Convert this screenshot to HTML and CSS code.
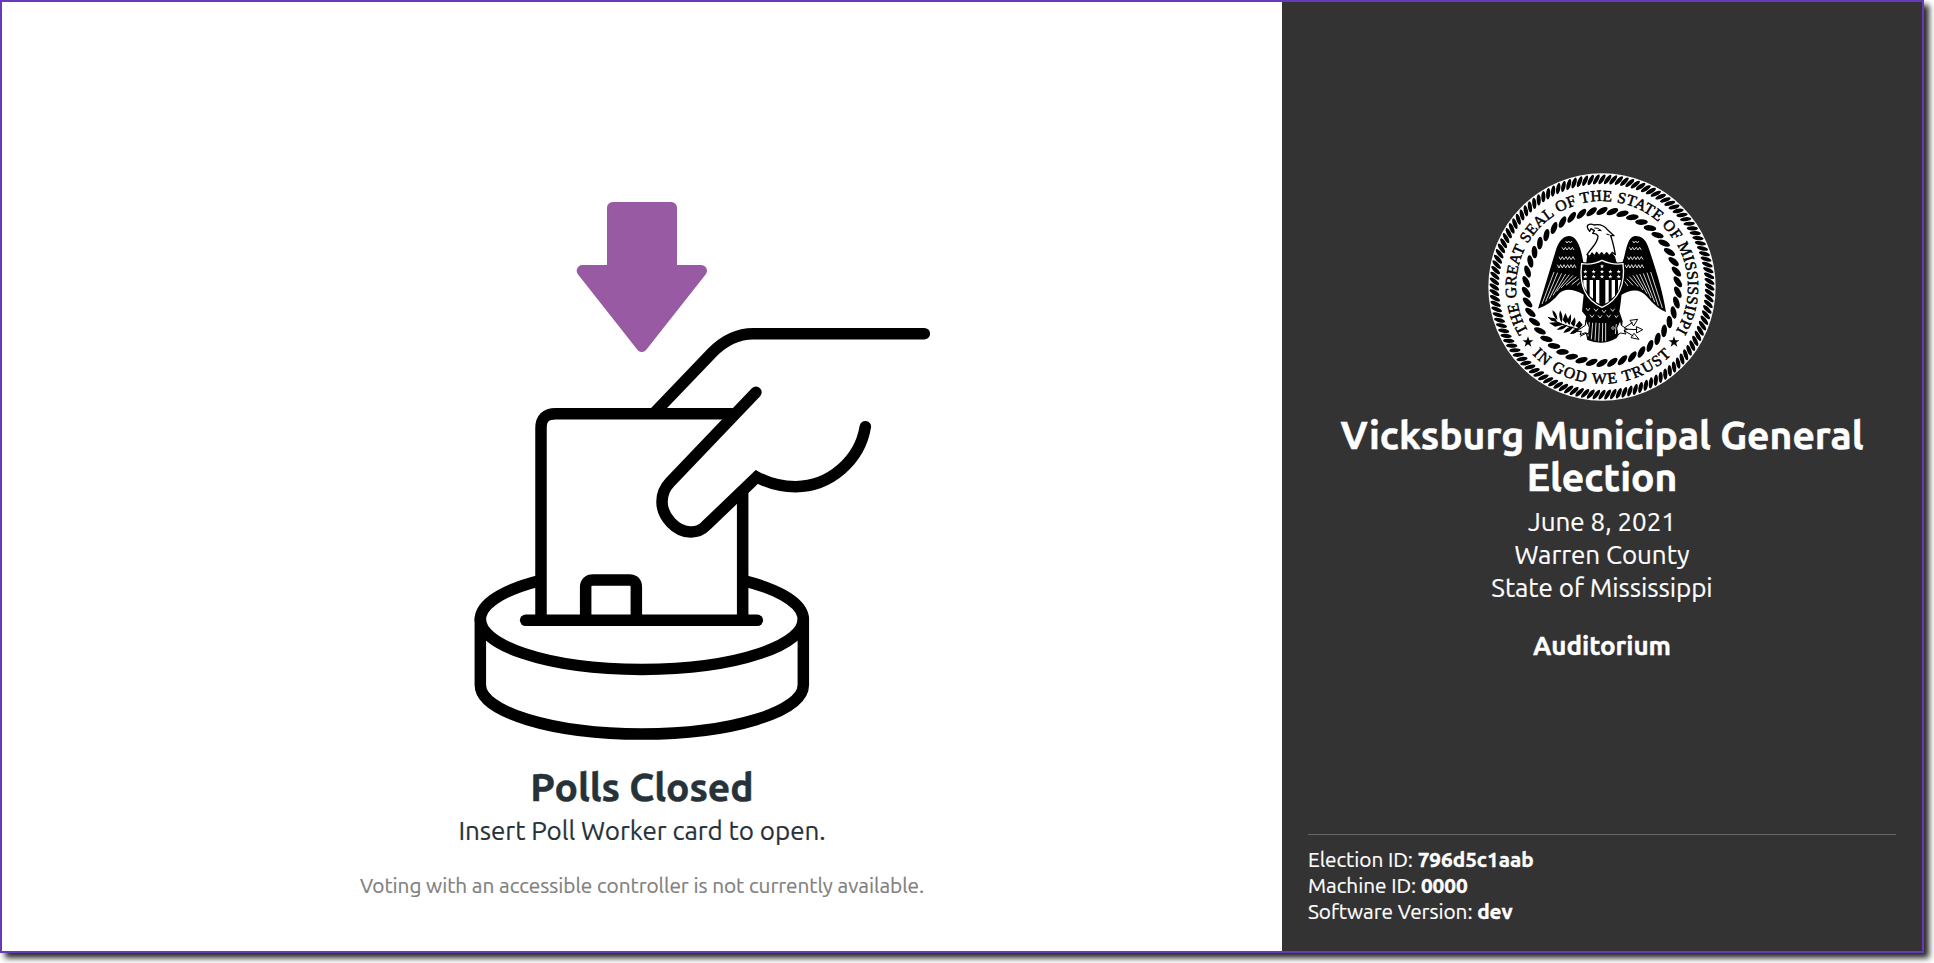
FILE: index.html
```html
<!DOCTYPE html>
<html lang="en">
<head>
<meta charset="utf-8">
<title>Polls Closed</title>
<link rel="stylesheet" href="styles.css">
</head>
<body>
<div class="window">
  <main class="main">
    <svg class="illustration" viewBox="-318 66 1731 1614">
      <path class="arrow" d="M458 83H634V272H724L545.5 499L367 272H458Z"/>
      <g class="lines">
        <path d="M585 697L756 518Q812 461 880 461H1393"/>
        <path d="M243 1320V744Q243 701 287 701H815"/>
        <path class="butt" d="M848 925V1320"/>
        <path d="M888 637L630 907Q606 932 606 965C606 1010 648 1056 693 1056Q720 1056 738 1037L890 891Q945 920 1007 920C1110 920 1200 840 1216 740"/>
        <path d="M197 1321H892"/>
        <path class="butt" d="M243 1201A484.500 150 0 1 0 848 1201"/>
        <path d="M61 1317V1515C61 1596 278 1662 545.500 1662S1030 1596 1030 1515V1317"/>
        <path d="M377 1321V1222Q377 1200 400 1200H508Q529 1200 529 1222V1321"/>
      </g>
    </svg>
    <h1 class="title polls">Polls Closed</h1>
    <p class="text insert">Insert Poll Worker card to open.</p>
    <p class="note">Voting with an accessible controller is not currently available.</p>
  </main>
  <aside class="sidebar">
    <div class="election">
      <svg class="seal" viewBox="24 25 684 684">
        <defs>
          <path id="arc-top" d="M144.800 499.900A258 258 0 1 1 587.200 499.900"/>
          <path id="arc-bottom" d="M157 569A291 291 0 0 0 575 569"/>
          <path id="star" d="M0-17L4.200-5.500H16L6.500 2L10 14L0 7L-10 14L-6.500 2L-16-5.500H-4.200Z"/>
        </defs>
        <circle cx="366" cy="367" r="341" fill="#fff"/>
        <g id="rope-outer"></g>
        <g id="rope-inner"></g>
        <text class="motto"><textPath href="#arc-top" textLength="1088" lengthAdjust="spacing">THE GREAT SEAL OF THE STATE OF MISSISSIPPI</textPath></text>
        <text class="motto"><textPath href="#arc-bottom" textLength="464" lengthAdjust="spacing">IN GOD WE TRUST</textPath></text>
        <use href="#star" x="144" y="532"/>
        <use href="#star" x="582" y="532"/>
        <!-- wings -->
        <path d="M312 305C306 265 296 215 268 214C245 213 232 240 226 262L174 432Q212 420 238 386Q262 362 312 390Z"/>
        <path d="M422 305C440 275 436 214 468 214C495 214 503 240 510 262C530 322 548 380 558 442Q532 434 500 395Q470 362 422 392Z"/>
        <g class="feathers">
          <path d="M186 418L222 322M197 411L233 324M208 402L245 326M219 392L257 328M230 380L268 330M243 370L279 332M258 362L289 336M275 360L298 342M291 362L304 350"/>
          <path d="M547 430L512 322M535 423L501 324M524 412L490 326M513 400L479 328M501 387L469 330M489 376L459 332M475 366L448 336M459 362L440 342M444 364L434 350"/>
          <path d="M232 300l5 10 5-10 5 10 5-10 5 10 6-10 5 10 5-10 5 10 5-10 5 10M237 276l5 9 5-9 5 9 6-9 5 9 5-9 5 9 6-9 5 9M246 248l5 8 5-8 5 8 6-8 5 8 5-8 5 8M257 229l4 6 5-6 5 6 5-6"/>
          <path d="M435 300l5 10 5-10 5 10 5-10 5 10 6-10 5 10 5-10 5 10 5-10 5 10M442 276l5 9 5-9 5 9 6-9 5 9 5-9 5 9 6-9 5 9M448 248l5 8 5-8 5 8 6-8 5 8 5-8 5 8M458 229l4 6 5-6 5 6 5-6"/>
        </g>
        <!-- body and tail -->
        <path d="M318 300L322 270L330 278L336 264L343 276L350 263L357 274L365 264L372 274L380 263L387 275L396 264L405 276L412 300L425 385Q422 420 418 440L428 470Q426 500 410 520Q370 545 322 526L314 490L318 455L306 440L312 380Z"/>
        <g class="feathers">
          <path d="M318 430l6 8 6-8M342 432l6 8 6-8M366 436l6 8 6-8M392 432l6 8 6-8M330 450l6 8 6-8M354 452l6 8 6-8M380 450l6 8 6-8M404 452l5 7 5-7"/>
          <path d="M328 473L324 515M338 474L334 524M348 474L345 528M358 475L356 530M368 475L367 531M377 475V530M409 478L406 508"/>
        </g>
        <circle cx="399" cy="490" r="4" fill="none" stroke="#fff" stroke-width="2"/>
        <!-- head -->
        <path class="head" d="M321 270C335 248 354 236 354 214Q350 206 338 206L343 198L333 192L329 200Q318 188 324 181Q332 176 342 181Q368 176 384 197L402 213L392 213Q400 235 406 270L397 263L388 274L380 264L372 273L365 264L357 273L350 263L343 274L336 265L330 275Z"/>
        <path class="thin" d="M343 190Q354 188 364 198L353 197M379 208L389 211"/>
        <!-- shield -->
        <path class="shield-edge" d="M305 297Q337 302 366 287Q397 302 429 297C437 360 415 407 366 428C317 407 297 360 305 297Z"/>
        <path class="shield" d="M305 297Q337 302 366 287Q397 302 429 297C437 360 415 407 366 428C317 407 297 360 305 297Z"/>
        <path fill="#fff" d="M310 346H320V381L310 362ZM329 346H339V402L329 394ZM348 346H358V418L348 412ZM376 346H386V411L376 417ZM395 346H405V393L395 402ZM414 346H423L414 382Z"/>
        <g fill="#fff">
          <use href="#star" transform="translate(366 305) scale(.4)"/>
          <use href="#star" transform="translate(316 321) scale(.4)"/><use href="#star" transform="translate(341 321) scale(.4)"/><use href="#star" transform="translate(366 321) scale(.4)"/><use href="#star" transform="translate(391 321) scale(.4)"/><use href="#star" transform="translate(416 321) scale(.4)"/>
          <use href="#star" transform="translate(316 336) scale(.4)"/><use href="#star" transform="translate(341 336) scale(.4)"/><use href="#star" transform="translate(366 336) scale(.4)"/><use href="#star" transform="translate(391 336) scale(.4)"/><use href="#star" transform="translate(416 336) scale(.4)"/>
        </g>
        <!-- olive branch -->
        <path class="thin" d="M204 458Q260 490 320 498M300 515L320 505"/>
        <path d="M204 458L226 461L232 472L214 468ZM217 437Q232 445 232 466Q218 455 217 437ZM240 437Q252 455 245 474Q234 458 240 437ZM256 445L264 462L258 478L248 466ZM272 448Q276 465 268 482L260 470ZM284 458Q290 472 282 487L272 476ZM207 474L234 472L250 480L225 486ZM230 495Q244 480 262 481Q252 498 230 495ZM250 504Q262 484 280 487Q270 505 250 504ZM270 508Q280 490 298 490Q290 510 270 508ZM298 468L308 480L298 492L286 484Z"/>
        <!-- talons -->
        <path class="claw" d="M318 466L316 482L298 494L290 500L304 500L300 510L316 504L326 508L328 488ZM421 466L424 482L442 494L432 498L438 508L422 505L414 510L410 490Z"/>
        <!-- arrows -->
        <path class="thin" d="M432 490L458 473M432 493L472 495M432 498L460 514M450 467L473 464L461 484ZM469 486L488 495L470 505ZM462 506L477 524L453 519Z"/>
      </svg>
      <h1 class="title">Vicksburg Municipal General Election</h1>
      <p class="text">June 8, 2021<br>Warren County<br>State of Mississippi</p>
      <p class="text place"><b>Auditorium</b></p>
    </div>
    <footer class="meta">
      <div>Election ID: <b>796d5c1aab</b></div>
      <div>Machine ID: <b>0000</b></div>
      <div>Software Version: <b>dev</b></div>
    </footer>
  </aside>
</div>
<script src="rope.js"></script>
</body>
</html>
```
FILE: styles.css
```css
* { box-sizing: border-box; }
html { min-height: 963px; overflow: hidden; }
body {
  margin: 0;
  height: 963px;
  background: #fff;
  font-family: Ubuntu, "Noto Sans", sans-serif;
  color: #263238;
}
.window {
  display: flex;
  width: 1924px;
  height: 953px;
  border: 2px solid #673ab7;
  box-shadow: 5px 5px 6px rgba(0, 0, 0, .85);
}
h1, p { margin: 0; }
.main {
  width: 1280px;
  padding-top: 200px;
  display: flex;
  flex-direction: column;
  align-items: center;
  text-align: center;
}
.illustration { width: 577px; height: 538px; flex: none; }
.arrow {
  fill: #985aa3;
  stroke: #985aa3;
  stroke-width: 34;
  stroke-linejoin: round;
}
.lines { fill: none; stroke: #000; stroke-width: 34.500; stroke-linecap: round; }
.lines .butt { stroke-linecap: butt; }
.title { font-size: 39px; line-height: 42px; font-weight: 700; -webkit-text-stroke: .5px; }
.text, .note, .meta { letter-spacing: -.04px; -webkit-text-stroke: .2px; }
b { -webkit-text-stroke: .4px; }
.text { font-size: 26px; line-height: 33px; }
.polls { margin-top: 26px; }
.insert { margin-top: 6px; }
.note { margin-top: 26px; font-size: 20.800px; line-height: 26px; color: #808080; }
.sidebar {
  width: 640px;
  padding: 0 26px;
  background: #333;
  color: #fff;
  display: flex;
  flex-direction: column;
  justify-content: space-between;
}
.election { padding-top: 171px; text-align: center; display: flex; flex-direction: column; align-items: center; }
.seal { width: 228px; height: 228px; margin-bottom: 13px; }
.election .text { margin-top: 7px; }
.election .place { margin-top: 25px; }
.meta {
  border-top: 1px solid #666;
  padding-top: 12px;
  height: 117px;
  font-size: 20.800px;
  line-height: 26px;
}
.motto {
  font: 47px "Liberation Serif", serif;
  fill: #000;
  stroke: #000;
  stroke-width: 1.500;
}
.feathers { fill: none; stroke: #fff; stroke-width: 2.500; }
.head { fill: #fff; stroke: #000; stroke-width: 4; stroke-linejoin: round; }
.thin { fill: none; stroke: #000; stroke-width: 3; }
.claw { fill: #fff; stroke: #000; stroke-width: 3; }
.shield-edge { stroke: #000; stroke-width: 10; }
.shield { fill: #000; stroke: #fff; stroke-width: 4; }
```
FILE: rope.js
```js
// Draws a ring of slanted strands around the seal's centre.
function rope(id, count, radius, rx, ry, tilt) {
  const group = document.getElementById(id);
  for (let i = 0; i < count; i++) {
    const strand = document.createElementNS("http://www.w3.org/2000/svg", "ellipse");
    strand.setAttribute("rx", rx);
    strand.setAttribute("ry", ry);
    strand.setAttribute("transform",
      `translate(366 367) rotate(${(i * 360) / count}) translate(0 ${-radius}) rotate(${tilt})`);
    group.appendChild(strand);
  }
}
rope("rope-outer", 120, 323, 17, 6.2, -56);
rope("rope-inner", 46, 228, 19, 8.5, -31);
```
